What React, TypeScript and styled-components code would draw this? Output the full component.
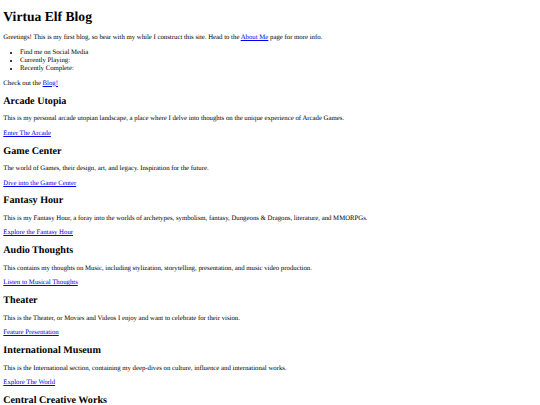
import React from 'react';
import styled, { createGlobalStyle } from 'styled-components';

// page was shot at ~1300px wide and shrunk, so the browser defaults are scaled down
const SCALE = 540 / 1300;
const px = (n: number) => `${(n * SCALE).toFixed(2)}px`;

const GlobalStyle = createGlobalStyle`
  html, body {
    margin: 0;
    padding: 0;
    background: #fff;
  }
`;

const Page = styled.div`
  font-family: 'Liberation Serif', 'Times New Roman', serif;
  font-size: 6.78px;
  line-height: ${px(18.38)};
  color: #000;
  text-rendering: geometricPrecision;
  padding: 0 ${px(8)};
  display: flow-root;
`;

const Title = styled.h1`
  font-size: 13.6px;
  line-height: ${px(36.77)};
  font-weight: bold;
  margin: ${px(21.44)} 0 ${px(23.8)};
`;

const SectionTitle = styled.h2`
  font-size: 10.15px;
  line-height: ${px(27.58)};
  font-weight: bold;
  margin: ${px(19.92)} 0;
`;

const Text = styled.p`
  margin: ${px(16)} 0;
`;

const List = styled.ul`
  margin: ${px(18.4)} 0;
  padding-left: ${px(40)};
  list-style: disc;
`;

const Link = styled.a`
  color: #0000ee;
  text-decoration: underline;
  cursor: pointer;
`;

const sections = [
  {
    title: 'Arcade Utopia',
    text: 'This is my personal arcade utopian landscape, a place where I delve into thoughts on the unique experience of Arcade Games.',
    link: 'Enter The Arcade',
  },
  {
    title: 'Game Center',
    text: 'The world of Games, their design, art, and legacy. Inspiration for the future.',
    link: 'Dive into the Game Center',
  },
  {
    title: 'Fantasy Hour',
    text: 'This is my Fantasy Hour, a foray into the worlds of archetypes, symbolism, fantasy, Dungeons & Dragons, literature, and MMORPGs.',
    link: 'Explore the Fantasy Hour',
  },
  {
    title: 'Audio Thoughts',
    text: 'This contains my thoughts on Music, including stylization, storytelling, presentation, and music video production.',
    link: 'Listen to Musical Thoughts',
  },
  {
    title: 'Theater',
    text: 'This is the Theater, or Movies and Videos I enjoy and want to celebrate for their vision.',
    link: 'Feature Presentation',
  },
  {
    title: 'International Museum',
    text: 'This is the International section, containing my deep-dives on culture, influence and international works.',
    link: 'Explore The World',
  },
  {
    title: 'Central Creative Works',
    text: 'This is the central hub for my own creative works, projects and experiments.',
    link: 'Visit the Works',
  },
];

export default function App() {
  return (
    <>
      <GlobalStyle />
      <Page>
        <Title>Virtua Elf Blog</Title>
        <Text>
          Greetings! This is my first blog, so bear with my while I construct this site. Head to the{' '}
          <Link href="#">About Me</Link> page for more info.
        </Text>
        <List>
          <li>Find me on Social Media</li>
          <li>Currently Playing:</li>
          <li>Recently Complete:</li>
        </List>
        <Text>
          Check out the <Link href="#">Blog!</Link>
        </Text>
        {sections.map(s => (
          <section key={s.title}>
            <SectionTitle>{s.title}</SectionTitle>
            <Text>{s.text}</Text>
            <Text>
              <Link href="#">{s.link}</Link>
            </Text>
          </section>
        ))}
      </Page>
    </>
  );
}
